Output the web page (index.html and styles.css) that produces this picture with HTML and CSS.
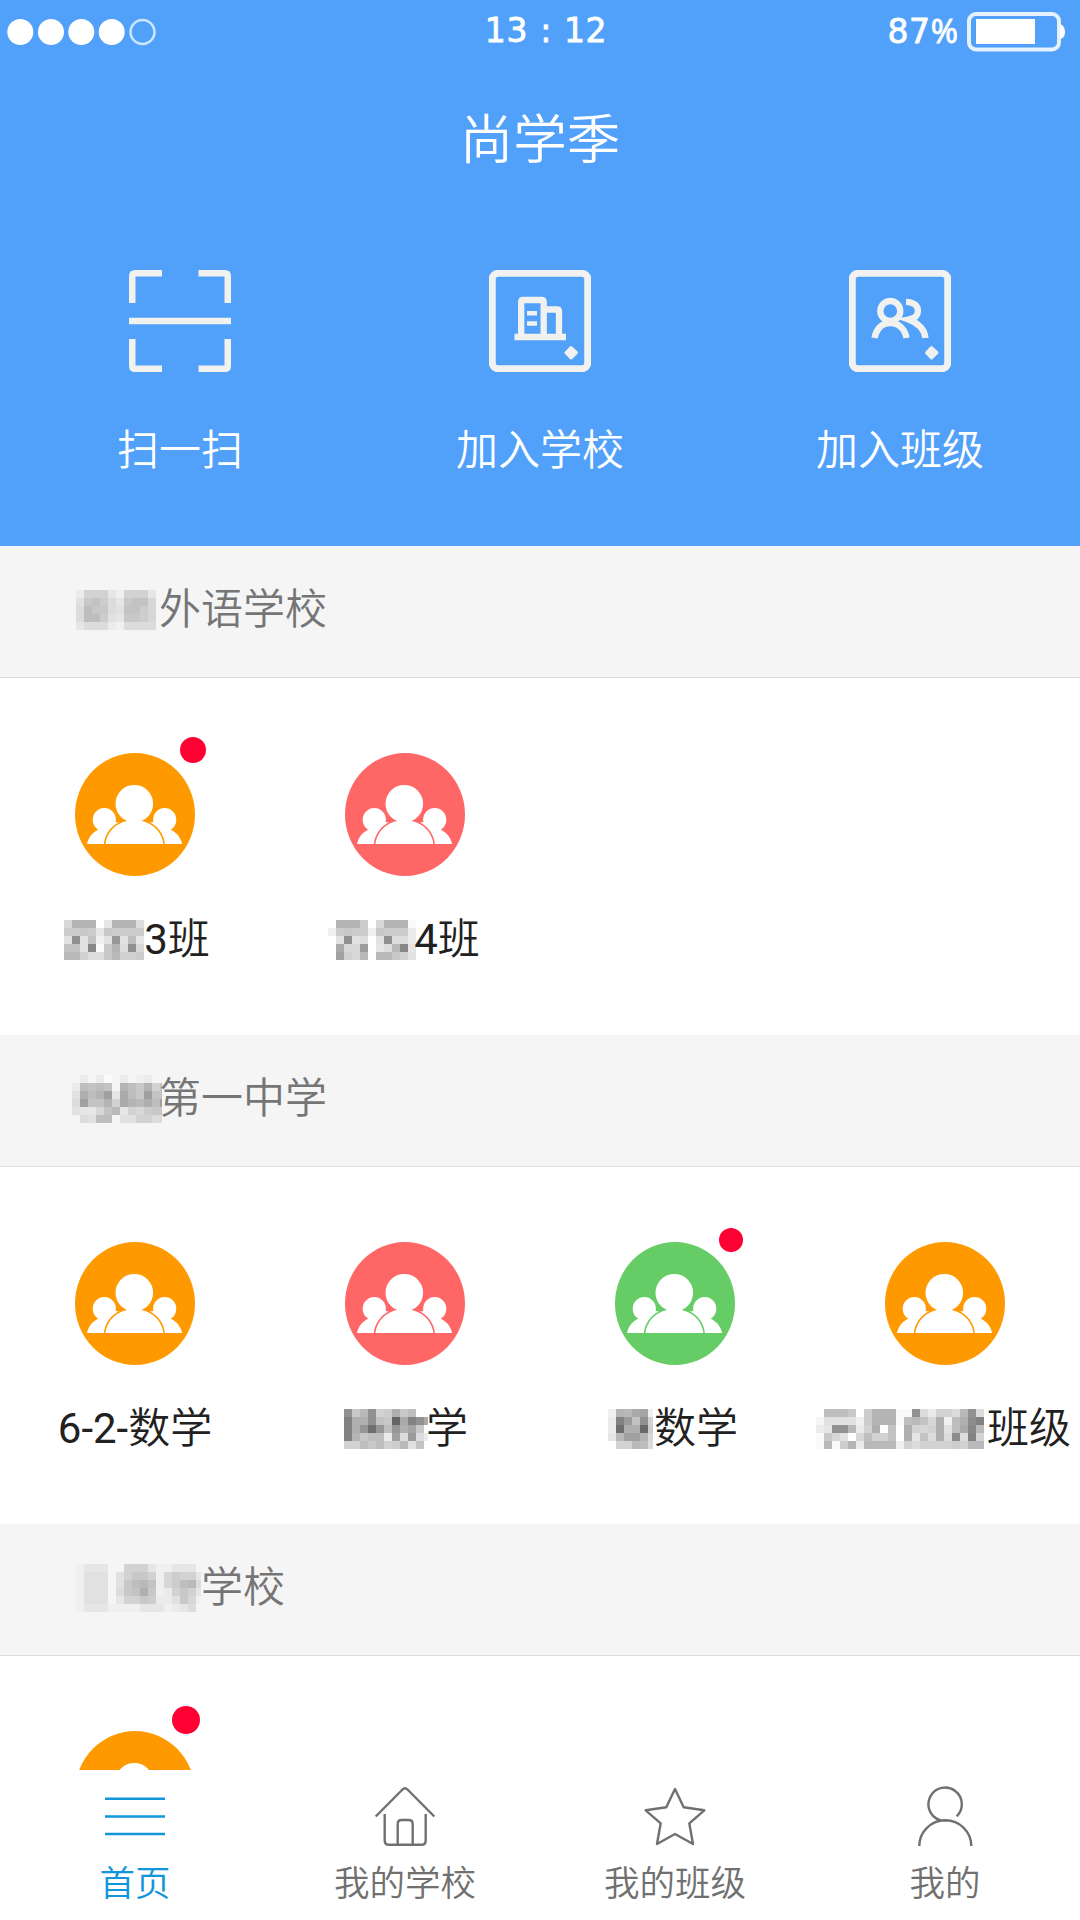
FILE: index.html
```html
<!DOCTYPE html>
<html lang="zh-CN">
<head>
<meta charset="utf-8">
<title>尚学季</title>
<link rel="stylesheet" href="styles.css">
</head>
<body>
<svg class="defs" width="0" height="0">
  <symbol id="group" viewBox="0 0 120 123">
    <ellipse cx="60" cy="61.5" rx="60" ry="61.5" fill="currentColor"/>
    <g fill="#fff">
      <circle cx="29.3" cy="66.7" r="11.6"/>
      <circle cx="89.7" cy="66.7" r="11.6"/>
      <path d="M12 91C13.500 84 18 78.500 25 76L40 69L48 70V91Z"/>
      <path d="M107.200 91C105.500 84 101 78.500 94 76L79 69L71 70V91Z"/>
    </g>
    <path d="M28.800 91C30.500 76 43 65.800 59.300 65.800S88.200 76 89.900 91Z" fill="currentColor"/>
    <path d="M30.400 91C32 77.500 43.500 67.200 59.300 67.200S86.700 77.500 88.400 91Z" fill="#fff"/>
    <circle cx="59.300" cy="50.700" r="18.800" fill="#fff"/>
  </symbol>
</svg>
<div class="app">
  <header class="top">
    <div class="status">
      <svg class="signal" width="152" height="28" viewBox="0 0 152 28">
        <g fill="#fff"><circle cx="13.300" cy="14" r="13"/><circle cx="44" cy="14" r="13"/><circle cx="74.300" cy="14" r="13"/><circle cx="104.700" cy="14" r="13"/></g>
        <circle cx="135.500" cy="14" r="12" fill="none" stroke="#cfe5fe" stroke-width="2.500"/>
      </svg>
      <span class="time">13 : 12</span>
      <div class="power">
        <span class="level">87<span class="percent">%</span></span>
        <svg width="99" height="40" viewBox="0 0 99 40">
          <rect x="2" y="2" width="90" height="35.500" rx="7" fill="none" stroke="#e6f2ff" stroke-width="4"/>
          <rect x="9" y="7" width="59" height="25" fill="#fff"/>
          <path d="M93 12q5 2 5 8t-5 7z" fill="#fff"/>
        </svg>
      </div>
    </div>
    <h1 class="title">尚学季</h1>
    <nav class="actions">
      <a class="action">
        <svg width="102" height="102" viewBox="0 0 102 102" fill="none" stroke="#f1f2ef" stroke-width="6.500">
          <path d="M3.250 33V6Q3.250 3.250 6 3.250H33M69.500 3.250H96Q98.750 3.250 98.750 6V33M98.750 69V96Q98.750 98.750 96 98.750H69.500M33 98.750H6Q3.250 98.750 3.250 96V69M0 51H102"/>
        </svg>
        <span>扫一扫</span>
      </a>
      <a class="action">
        <svg width="102" height="102" viewBox="0 0 102 102" fill="none" stroke="#f1f2ef" stroke-width="6.300">
          <rect x="3.250" y="3.250" width="95.500" height="95.500" rx="6" stroke-width="7"/>
          <path d="M32.200 67V32Q32.200 30 34 30H52.500Q54.700 30 54.700 32V67M55 39.500H68Q70 39.500 70 41.500V67M25.500 67H77"/>
          <path d="M38 43.300H48M38 53.500H48" stroke-width="4.500"/>
          <path d="M82 77.500L87.500 82.700L82 88L77 82.700Z" fill="#f1f2ef" stroke-width="3" stroke-linejoin="round"/>
        </svg>
        <span>加入学校</span>
      </a>
      <a class="action">
        <svg width="102" height="102" viewBox="0 0 102 102" fill="none" stroke="#f1f2ef" stroke-width="6.300">
          <rect x="3.250" y="3.250" width="95.500" height="95.500" rx="6" stroke-width="7"/>
          <circle cx="41.300" cy="41" r="10"/>
          <path d="M25.500 68C27 59 33 53 41.300 53S56 59 57.500 68M57 31.800C65 32 69 35.500 69 41C69 46 65 48.500 59.500 49.500C69 53 75.500 59 76.500 68"/>
          <path d="M82.500 77.500L88 82.700L82.500 88L77.500 82.700Z" fill="#f1f2ef" stroke-width="3" stroke-linejoin="round"/>
        </svg>
        <span>加入班级</span>
      </a>
    </nav>
  </header>

  <main class="list">
    <section>
      <h2 class="school"><svg class="mosaic foreign" width="80" height="40" data-cells="4999539995 6bca75bcc8 7dbb76cca8 7dda65bba8 5777437777"></svg>外语学校</h2>
      <div class="classes">
        <div class="class"><div class="avatar orange"><svg width="120" height="123"><use href="#group"/></svg><i class="dot dot-a"></i></div>
          <p class="name"><svg class="mosaic m3" width="80" height="40" data-cells="8fff05fff7 aaba5baaaa 6m6c36l6d5 cc6o1bf7m8 ee977be99a"></svg>3班</p></div>
        <div class="class"><div class="avatar red"><svg width="120" height="123"><use href="#group"/></svg></div>
          <p class="name"><svg class="mosaic m4" width="88" height="40" data-cells="0fffa08fff1 3abaa3baaa4 06m6706m774 0h88k057eo5 0j98e0eeb96"></svg>4班</p></div>
      </div>
    </section>
    <section>
      <h2 class="school"><svg class="mosaic first" width="90" height="48" data-cells="040410403400 4dcdc2fdbf9c 6gdfj5hdbjcc 7jccf9hfegdj 6558ce598abb 076dd2669977"></svg>第一中学</h2>
      <div class="classes">
        <div class="class"><div class="avatar orange"><svg width="120" height="123"><use href="#group"/></svg></div>
          <p class="name">6-2-数学</p></div>
        <div class="class"><div class="avatar red"><svg width="120" height="123"><use href="#group"/></svg></div>
          <p class="name"><svg class="mosaic math" width="84" height="40" data-cells="mbem9agbd00 pggmcbvhpmh pgltldlgib0 pfbdd4j7k74 99dbd9ae6c0"></svg>学</p></div>
        <div class="class"><div class="avatar green"><svg width="120" height="123"><use href="#group"/></svg><i class="dot dot-b"></i></div>
          <p class="name"><svg class="mosaic math2" width="45" height="40" data-cells="3fehi3 4pkcm9 4tggua 5ejjf8 099ed7"></svg>数学</p></div>
        <div class="class"><div class="avatar orange"><svg width="120" height="123"><use href="#group"/></svg></div>
          <p class="name"><svg class="mosaic newyear" width="168" height="40" data-cells="0dddb0afff11m74997em7 266663afff1dec8g3dgnp 45mme49g0c0g989g6dhoe 1b8608d99c0g5c7g7n7p9 1e1af4eeee3979999a9ee"></svg>班级</p></div>
      </div>
    </section>
    <section>
      <h2 class="school"><svg class="mosaic third" width="125" height="48" data-cells="3555229995335552 3666269bb938a995 366626bdec38ade7 366627bcgb349b95 36662599ba446b83 3555333355534572"></svg>学校</h2>
      <div class="classes">
        <div class="class"><div class="avatar orange"><svg width="120" height="123"><use href="#group"/></svg><i class="dot dot-c"></i></div></div>
      </div>
    </section>
  </main>

  <nav class="tabs">
    <a class="tab active">
      <svg width="60" height="60" viewBox="0 0 60 60"><path d="M0 12.700H60M0 30.500H60M0 48H60"/></svg>
      <span>首页</span>
    </a>
    <a class="tab">
      <svg width="60" height="60" viewBox="0 0 60 60"><path d="M.7 30.500L27.500 3.500Q30 1 32.500 3.500L59.300 30.500M9.700 28V54.500Q9.700 58.800 14 58.800H46.500Q50.700 58.800 50.700 54.500V28M22.700 58.800V38Q22.700 34 26.700 34H33.700Q37.700 34 37.700 38V58.800"/></svg>
      <span>我的学校</span>
    </a>
    <a class="tab">
      <svg width="60" height="60" viewBox="0 0 60 60"><path d="M30 3L38.700 21.300L59.300 24.300L44.300 37.300L48 58L30 48L12 58L15.700 37.300L.7 24.300L21.300 21.300Z"/></svg>
      <span>我的班级</span>
    </a>
    <a class="tab">
      <svg width="60" height="60" viewBox="0 0 60 60"><path d="M41.700 30.300A16.700 16.700 0 1 0 24.500 34Q27 34.700 30.300 34.500M4.300 60A26 25.700 0 0 1 56.300 60"/></svg>
      <span>我的</span>
    </a>
  </nav>
</div>
<script src="mosaic.js"></script>
</body>
</html>
```
FILE: styles.css
```css
* { box-sizing: border-box; margin: 0; padding: 0; }
body { font-family: Roboto, "Noto Sans CJK SC DemiLight", "Noto Sans CJK SC", sans-serif; font-weight: 400; }
svg { display: block; flex: none; }
.defs { position: absolute; }
.app { width: 1080px; height: 1920px; display: flex; flex-direction: column; overflow: hidden; background: #fff; }

.top { height: 546px; flex: none; background: #51a0f9; color: #fff; font-family: "Noto Sans CJK SC DemiLight", "Noto Sans CJK SC", sans-serif; }
.status { height: 64px; display: grid; grid-template-columns: 1fr auto 1fr; align-items: center; padding: 0 14px 0 7px; font: 33px/40px "DejaVu Sans", sans-serif; -webkit-text-stroke: 0.8px #fff; }
.time { white-space: pre; word-spacing: 1px; letter-spacing: 0.6px; padding: 0 0 2px 19px; }
.power { display: flex; justify-content: flex-end; align-items: center; gap: 9px; }
.level { padding-bottom: 2px; letter-spacing: 0.6px; }
.percent { font-family: "Open Sans", sans-serif; letter-spacing: 0; }
.title { font-size: 53.5px; line-height: 80px; font-weight: 400; text-align: center; margin-top: 32px; }
.actions { display: grid; grid-template-columns: repeat(3, 1fr); margin-top: 94px; }
.action { display: flex; flex-direction: column; align-items: center; gap: 45px; font-size: 42px; line-height: 60px; }

.list { flex: 1; min-height: 0; overflow: hidden; }
.school { height: 132px; display: flex; align-items: center; padding: 0 75px 4px; background: #f5f5f5; border-bottom: 1px solid #ddd; color: #757575; font-size: 42px; line-height: 60px; font-weight: 400; }
.classes { height: 357px; display: grid; grid-template-columns: repeat(4, 270px); padding-top: 75px; }
.class { display: flex; flex-direction: column; align-items: center; gap: 34px; }
.avatar { position: relative; }
.name { display: flex; align-items: center; height: 60px; font-size: 42px; line-height: 60px; color: #212121; white-space: nowrap; }
.orange { color: #ff9900; }
.red { color: #ff6666; }
.green { color: #66cc66; }

.dot { position: absolute; border-radius: 50%; background: #ff0033; }
.dot-a { width: 26px; height: 26px; left: 105px; top: -16px; }
.dot-b { width: 24px; height: 24px; left: 104px; top: -14px; }
.dot-c { width: 28px; height: 28px; left: 97px; top: -25px; }

.foreign { margin: 0 3px 0 1px; }
.first { margin: 0 -3px; }
.third { margin-left: 1px; }
.m3 { margin-left: 4px; }
.m4 { margin: 0 -2px; }
.math { margin: 0 -2px 0 2px; }
.math2 { margin: 0 1px 0 -4px; }
.newyear { margin: 0 3px 0 -3px; }

.tabs { height: 150px; flex: none; display: grid; grid-template-columns: repeat(4, 1fr); padding-top: 16px; background: #fff; }
.tab { display: flex; flex-direction: column; align-items: center; gap: 12px; color: #707070; font-size: 35.5px; line-height: 52px; }
.tab svg { fill: none; stroke: currentColor; stroke-width: 2.4; stroke-linejoin: round; overflow: visible; }
.tab.active { color: #1296db; }
```
FILE: mosaic.js
```js
// Fills each mosaic with 8px grey cells; a base-36 digit is the darkness in steps of 5.
document.querySelectorAll('.mosaic').forEach(function (svg) {
  var cols = Math.ceil(svg.getAttribute('width') / 8);
  svg.setAttribute('shape-rendering', 'crispEdges');
  svg.dataset.cells.replace(/ /g, '').split('').forEach(function (ch, i) {
    var v = parseInt(ch, 36);
    if (!v) return;
    var g = 255 - v * 5;
    var cell = document.createElementNS('http://www.w3.org/2000/svg', 'rect');
    cell.setAttribute('x', (i % cols) * 8);
    cell.setAttribute('y', Math.floor(i / cols) * 8);
    cell.setAttribute('width', 8);
    cell.setAttribute('height', 8);
    cell.setAttribute('fill', 'rgb(' + g + ',' + g + ',' + g + ')');
    svg.appendChild(cell);
  });
});
```
